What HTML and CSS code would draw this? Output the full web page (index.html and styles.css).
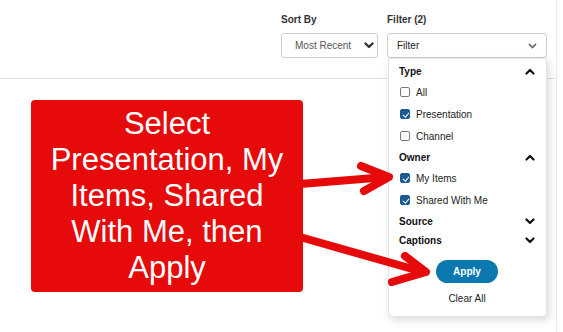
FILE: index.html
```html
<!DOCTYPE html>
<html lang="en">
<head>
    <meta charset="UTF-8">
    <meta name="viewport" content="width=device-width, initial-scale=1.0">
    <title>Media Library Filter</title>
    <link rel="stylesheet" href="styles.css">
</head>
<body>
    <div class="page">
        <!-- Toolbar with sort and filter -->
        <div class="toolbar">
            <div class="control sort">
                <label>Sort By</label>
                <div class="select sort-select">
                    <span>Most Recent</span>
                    <svg class="chev dark" width="10" height="7" viewBox="0 0 10 7"><polyline points="1.5,1.5 5,5 8.5,1.5"/></svg>
                </div>
            </div>
            <div class="control filter">
                <label>Filter (2)</label>
                <div class="select filter-select">
                    <span>Filter</span>
                    <svg class="chev light" width="9" height="6" viewBox="0 0 9 6"><polyline points="1.5,1.5 4.5,4.5 7.5,1.5"/></svg>
                </div>

                <div class="filter-menu">
                    <div class="group-head">
                        <span>Type</span>
                        <svg class="chev" width="10" height="7" viewBox="0 0 10 7"><polyline points="1.5,5.5 5,2 8.5,5.5"/></svg>
                    </div>
                    <div class="option"><span class="box"></span>All</div>
                    <div class="option"><span class="box checked"></span>Presentation</div>
                    <div class="option"><span class="box"></span>Channel</div>

                    <div class="group-head">
                        <span>Owner</span>
                        <svg class="chev" width="10" height="7" viewBox="0 0 10 7"><polyline points="1.5,5.5 5,2 8.5,5.5"/></svg>
                    </div>
                    <div class="option"><span class="box checked"></span>My Items</div>
                    <div class="option"><span class="box checked"></span>Shared With Me</div>

                    <div class="group-head">
                        <span>Source</span>
                        <svg class="chev" width="10" height="7" viewBox="0 0 10 7"><polyline points="1.5,1.5 5,5 8.5,1.5"/></svg>
                    </div>
                    <div class="group-head short">
                        <span>Captions</span>
                        <svg class="chev" width="10" height="7" viewBox="0 0 10 7"><polyline points="1.5,1.5 5,5 8.5,1.5"/></svg>
                    </div>

                    <button class="apply-btn">Apply</button>
                    <div class="clear-all">Clear All</div>
                </div>
            </div>
        </div>

        <!-- Annotation callout -->
        <div class="callout">Select<br>Presentation, My<br>Items, Shared<br>With Me, then<br>Apply</div>

        <svg class="arrows" width="563" height="332" viewBox="0 0 563 332">
            <g stroke="#e60a0a" stroke-width="8" stroke-linecap="round" stroke-linejoin="round" fill="none">
                <line x1="300" y1="184" x2="387" y2="177"/>
                <polyline points="361,166 389,177 364,191"/>
                <line x1="300" y1="237" x2="423" y2="272"/>
                <polyline points="405,256 426,272 392,282"/>
            </g>
        </svg>
    </div>
</body>
</html>
```

FILE: styles.css
```css
body {
    font-family: "Liberation Sans", Arial, sans-serif;
    background-color: white;
    margin: 0;
    padding: 0;
    color: #222;
}
.page {
    position: relative;
    width: 556px;
    height: 332px;
    border-right: 1px solid #ececec;
}
.toolbar {
    height: 79px;
    border-bottom: 1px solid #e2e2e2;
    display: flex;
    justify-content: flex-end;
    gap: 9px;
    padding: 14px 9px 0 0;
    box-sizing: border-box;
}
.control {
    display: flex;
    flex-direction: column;
}
.control label {
    font-size: 10px;
    font-weight: bold;
    line-height: 12px;
    color: #333;
    margin-bottom: 7px;
}
.select {
    display: flex;
    align-items: center;
    justify-content: space-between;
    height: 25px;
    box-sizing: border-box;
    border: 1px solid #cfcfcf;
    border-radius: 3px;
    font-size: 10px;
    background: #fff;
}
.sort-select {
    width: 97px;
    padding: 0 3px 0 13px;
    color: #555;
}
.filter-select {
    width: 160px;
    padding: 0 9px 0 9px;
    color: #222;
}
.filter {
    position: relative;
}
.chev polyline {
    fill: none;
    stroke: #111;
    stroke-width: 2.2;
    stroke-linecap: round;
    stroke-linejoin: round;
}
.chev.dark polyline {
    stroke: #333;
    stroke-width: 2.4;
}
.chev.light polyline {
    stroke: #777;
    stroke-width: 1.8;
}

/* dropdown panel */
.filter-menu {
    position: absolute;
    top: 44px;
    left: 1px;
    width: 159px;
    box-sizing: border-box;
    background: #fff;
    border: 1px solid #e4e4e4;
    border-radius: 0 0 4px 4px;
    box-shadow: 2px 3px 8px rgba(0, 0, 0, 0.15);
    padding: 2px 11px 11px 10px;
    display: flex;
    flex-direction: column;
    z-index: 2;
}
.group-head {
    display: flex;
    align-items: center;
    justify-content: space-between;
    height: 20px;
    font-size: 10px;
    font-weight: bold;
    color: #111;
}
.group-head.short {
    height: 18px;
}
.option {
    display: flex;
    align-items: center;
    height: 22px;
    font-size: 10px;
    color: #222;
    padding-left: 1px;
}
.box {
    width: 10px;
    height: 10px;
    box-sizing: border-box;
    border: 1px solid #7a7a7a;
    border-radius: 2px;
    margin-right: 6px;
    position: relative;
}
.box.checked {
    background: #1b5b94;
    border-color: #1b5b94;
}
.box.checked::after {
    content: "";
    position: absolute;
    left: 2.5px;
    top: 0.5px;
    width: 2.5px;
    height: 5px;
    border: solid #fff;
    border-width: 0 1.6px 1.6px 0;
    transform: rotate(40deg);
}
.apply-btn {
    align-self: center;
    margin-top: 11px;
    width: 62px;
    height: 23px;
    border: none;
    border-radius: 12px;
    background-color: #0b79b0;
    color: white;
    font-family: "Liberation Sans", Arial, sans-serif;
    font-size: 10px;
    font-weight: bold;
    padding: 0;
}
.clear-all {
    text-align: center;
    margin-top: 10px;
    font-size: 10px;
    line-height: 12px;
    color: #222;
}

/* annotation */
.callout {
    position: absolute;
    left: 31px;
    top: 100px;
    width: 272px;
    height: 192px;
    background-color: #e60a0a;
    border-radius: 4px;
    color: white;
    font-size: 31px;
    line-height: 36px;
    text-align: center;
    display: flex;
    align-items: center;
    justify-content: center;
    z-index: 3;
}
.arrows {
    position: absolute;
    left: 0;
    top: 0;
    pointer-events: none;
    z-index: 4;
}
```
